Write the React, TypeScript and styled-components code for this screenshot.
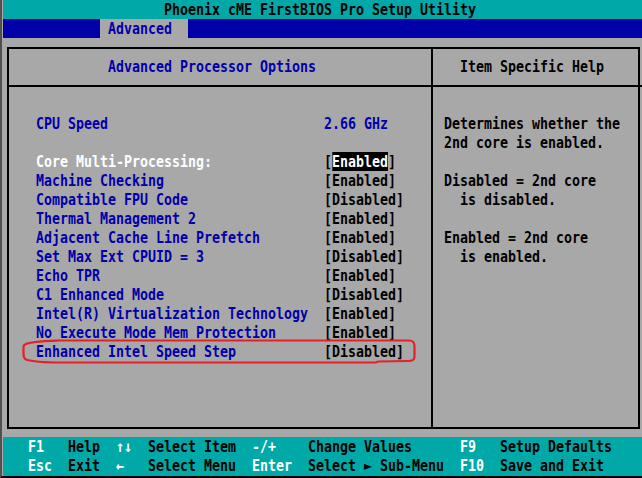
import styled, { createGlobalStyle } from 'styled-components';

const cyan = '#00a8a8';
const navy = '#0000a8';
const grey = '#a8a8a8';

const GlobalStyle = createGlobalStyle`
  *, *::before, *::after { box-sizing: border-box; }
  html, body { margin: 0; padding: 0; background: ${grey}; }
  #root { width: 642px; height: 478px; overflow: hidden; }
`;

const Screen = styled.div`
  position: relative;
  width: 642px;
  height: 478px;
  display: flex;
  flex-direction: column;
  background: ${grey};
  border-left: 2px solid #505050;
  border-bottom: 2px solid #000;
  padding-left: 1px;
`;

// bios font: 8px per char cell, 19px per row
const Txt = styled.span<{ $c?: string }>`
  display: inline-block;
  font-family: "DejaVu Sans Mono", monospace;
  font-size: 16px;
  font-weight: bold;
  line-height: 19px;
  white-space: pre;
  color: ${(p) => p.$c ?? '#000'};
  transform: scaleX(0.8305);
  transform-origin: 0 50%;
`;

const Sel = styled.span`
  background: #000;
  color: #fff;
`;

const TitleBar = styled.div`
  flex: none;
  height: 19px;
  background: ${cyan};
  padding-left: 161px;
`;

const MenuBar = styled.div`
  flex: none;
  height: 19px;
  display: flex;
  background: ${navy};
  padding-left: 97px;
`;

const Tab = styled.div`
  width: 88px;
  padding-left: 8px;
  background: ${grey};
`;

const Body = styled.div`
  flex: 1;
  padding: 9px 2px 8px 4px;
`;

const Panel = styled.div`
  height: 100%;
  display: grid;
  grid-template-columns: 424px 1fr;
  grid-template-rows: 38px 1fr;
  border: 2px solid #000;
`;

const Cell = styled.div<{ $head?: boolean; $side?: boolean; $pad: number }>`
  border-right: ${(p) => (p.$side ? 'none' : '2px solid #000')};
  border-bottom: ${(p) => (p.$head ? '2px solid #000' : 'none')};
  padding: ${(p) => (p.$head ? 8 : 27)}px 0 0 ${(p) => p.$pad}px;
`;

const Settings = styled.div`
  display: grid;
  grid-template-columns: 288px 1fr;
  grid-auto-rows: 19px;
`;

const Help = styled.div`
  display: flex;
  flex-direction: column;
`;

const Footer = styled.div`
  flex: none;
  height: 39px;
  background: ${cyan};
  padding-left: 25px;
  display: grid;
  grid-template-columns: 40px 48px 32px 104px 56px 152px 40px 1fr;
  grid-template-rows: 19px 19px;
`;

const Mark = styled.svg`
  position: absolute;
  top: 0;
  left: -2px;
  width: 642px;
  height: 478px;
  pointer-events: none;
`;

type Item = { label: string; value: string; active?: boolean; plain?: boolean } | null;

const items: Item[] = [
  { label: 'CPU Speed', value: '2.66 GHz', plain: true },
  null,
  { label: 'Core Multi-Processing:', value: 'Enabled', active: true },
  { label: 'Machine Checking', value: 'Enabled' },
  { label: 'Compatible FPU Code', value: 'Disabled' },
  { label: 'Thermal Management 2', value: 'Enabled' },
  { label: 'Adjacent Cache Line Prefetch', value: 'Enabled' },
  { label: 'Set Max Ext CPUID = 3', value: 'Disabled' },
  { label: 'Echo TPR', value: 'Enabled' },
  { label: 'C1 Enhanced Mode', value: 'Disabled' },
  { label: 'Intel(R) Virtualization Technology', value: 'Enabled' },
  { label: 'No Execute Mode Mem Protection', value: 'Enabled' },
  { label: 'Enhanced Intel Speed Step', value: 'Disabled' },
];

const helpLines = [
  'Determines whether the',
  '2nd core is enabled.',
  '',
  'Disabled = 2nd core',
  '  is disabled.',
  '',
  'Enabled = 2nd core',
  '  is enabled.',
];

const keys = [
  ['F1', 'Help', '↑↓', 'Select Item', '-/+', 'Change Values', 'F9', 'Setup Defaults'],
  ['Esc', 'Exit', '←', 'Select Menu', 'Enter', 'Select ► Sub-Menu', 'F10', 'Save and Exit'],
];

export default function App() {
  return (
    <>
      <GlobalStyle />
      <Screen>
        <TitleBar>
          <Txt>Phoenix cME FirstBIOS Pro Setup Utility</Txt>
        </TitleBar>
        <MenuBar>
          <Tab>
            <Txt $c={navy}>Advanced</Txt>
          </Tab>
        </MenuBar>
        <Body>
          <Panel>
            <Cell $head $pad={99}>
              <Txt $c={navy}>Advanced Processor Options</Txt>
            </Cell>
            <Cell $head $side $pad={27}>
              <Txt>Item Specific Help</Txt>
            </Cell>
            <Cell $pad={27}>
              <Settings>
                {items.map((it, i) =>
                  it ? (
                    <>
                      <Txt key={'l' + i} $c={it.active ? '#fff' : navy}>{it.label}</Txt>
                      {it.plain ? (
                        <Txt key={'v' + i} $c={navy}>{it.value}</Txt>
                      ) : (
                        <Txt key={'v' + i}>
                          [{it.active ? <Sel>{it.value}</Sel> : it.value}]
                        </Txt>
                      )}
                    </>
                  ) : (
                    <>
                      <span key={'a' + i} />
                      <span key={'b' + i} />
                    </>
                  )
                )}
              </Settings>
            </Cell>
            <Cell $side $pad={11}>
              <Help>
                {helpLines.map((line, i) => (
                  <Txt key={i}>{line || ' '}</Txt>
                ))}
              </Help>
            </Cell>
          </Panel>
        </Body>
        <Footer>
          {keys.map((row) =>
            row.map((t, j) => (
              <Txt key={row[0] + j} $c={j % 2 === 0 ? '#fff' : '#000'}>
                {t}
              </Txt>
            ))
          )}
        </Footer>
        <Mark viewBox="0 0 642 478">
          <path
            d="M26 344 C30 341.5 45 341 58 340.5 L409 340.5 C413 340.5 414.5 342 414.5 346 L414.5 357 C414.5 360 412 361 408 361 L378 361.5 L376 362.5 L62 362.5 C45 362.5 30 361 26 359.5 C24 358.5 23.5 357 23.5 354 L23.5 347 C23.5 345.5 24.5 344.5 26 344 Z"
            fill="none"
            stroke="#e52127"
            strokeWidth="2.2"
          />
        </Mark>
      </Screen>
    </>
  );
}
